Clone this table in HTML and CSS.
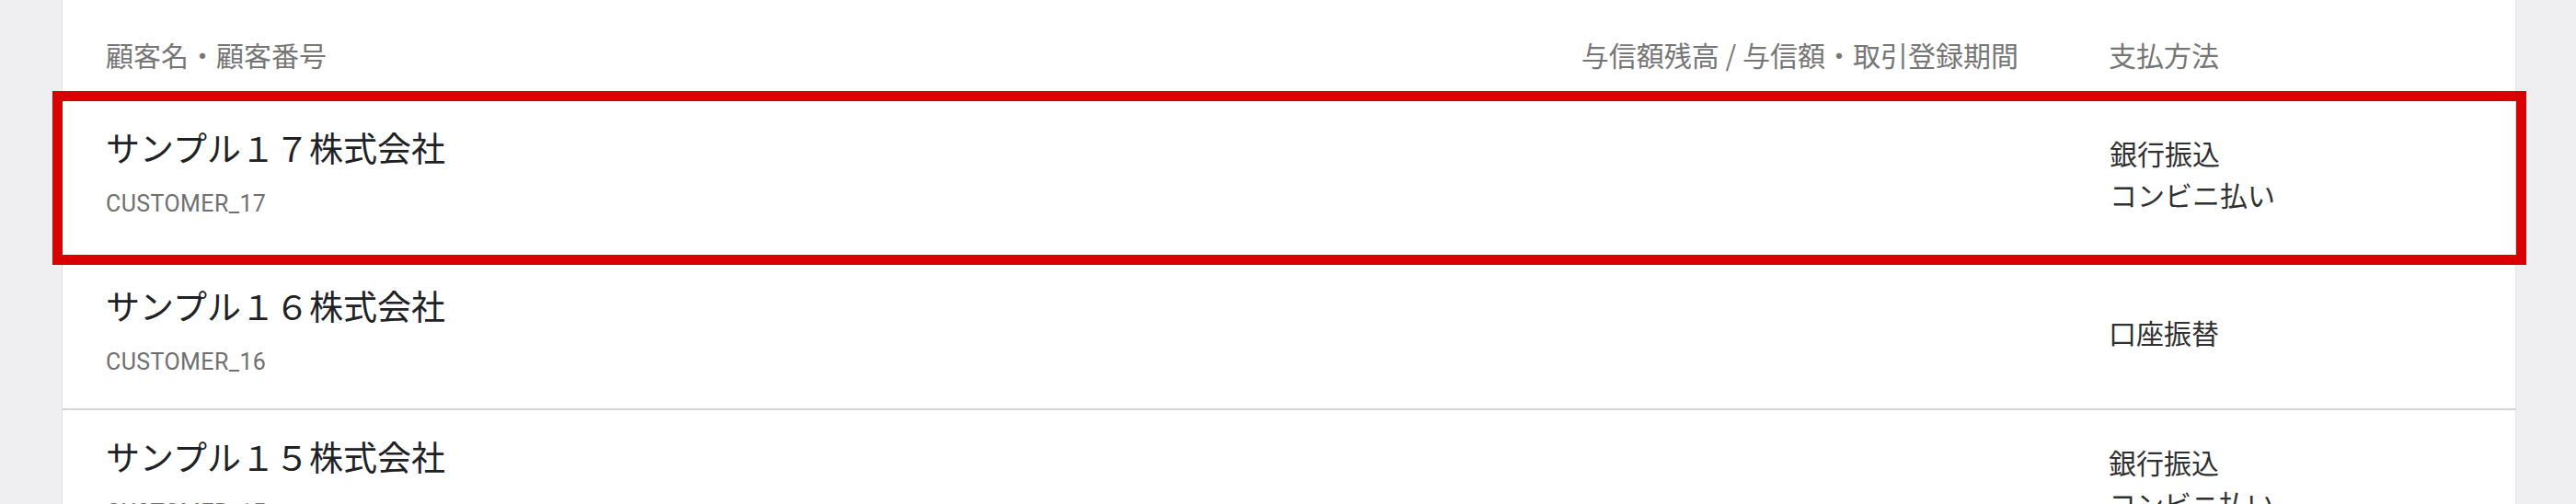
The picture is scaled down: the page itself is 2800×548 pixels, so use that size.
FILE: index.html
```html
<!DOCTYPE html>
<html lang="ja">
<head>
<meta charset="utf-8">
<title>顧客一覧</title>
<link rel="stylesheet" href="styles.css">
</head>
<body>
<div class="page">
  <div class="card">
    <div class="row head">
      <div class="c-name">顧客名・顧客番号</div>
      <div class="c-credit">与信額残高 / 与信額・取引登録期間</div>
      <div class="c-pay">支払方法</div>
    </div>
    <div class="row item selected">
      <div class="c-name">
        <div class="name">サンプル１７株式会社</div>
        <div class="code">CUSTOMER_17</div>
      </div>
      <div class="c-credit"></div>
      <div class="c-pay">
        <div>銀行振込</div>
        <div>コンビニ払い</div>
      </div>
    </div>
    <div class="row item">
      <div class="c-name">
        <div class="name">サンプル１６株式会社</div>
        <div class="code">CUSTOMER_16</div>
      </div>
      <div class="c-credit"></div>
      <div class="c-pay">
        <div>口座振替</div>
      </div>
    </div>
    <div class="row item">
      <div class="c-name">
        <div class="name">サンプル１５株式会社</div>
        <div class="code">CUSTOMER_15</div>
      </div>
      <div class="c-credit"></div>
      <div class="c-pay">
        <div>銀行振込</div>
        <div>コンビニ払い</div>
      </div>
    </div>
  </div>
</div>
</body>
</html>
```

FILE: styles.css
```css
html, body {
  margin: 0;
  height: 100%;
}

body {
  background: #efeff1;
  font-family: "Noto Sans CJK JP", "Noto Sans", sans-serif;
  overflow: hidden;
}

.page {
  padding: 0 65px 0 67px;
}

.card {
  background: #ffffff;
  border-left: 1px solid #e1e1e4;
  border-right: 1px solid #e1e1e4;
  min-height: 700px;
}

.row {
  display: grid;
  grid-template-columns: 1fr auto 395px;
  column-gap: 98px;
  align-items: center;
  padding: 0 47px;
}

.head {
  box-sizing: border-box;
  height: 99px;
  padding-top: 18px;
  font-size: 30px;
  line-height: 40px;
  color: #767676;
}

.head .c-credit {
  text-align: right;
}

.item {
  padding-top: 17px;
  padding-bottom: 17px;
  border-bottom: 2px solid #d5d5d8;
}

.item.selected {
  border: 11px solid #d90000;
  margin: 0 -12px 0 -11px;
}

.item .c-name {
  padding-bottom: 15px;
}

.name {
  font-size: 37px;
  line-height: 54px;
  color: #202124;
}

.code {
  margin-top: 17px;
  font-family: Roboto, "Liberation Sans", sans-serif;
  font-size: 25px;
  letter-spacing: 0.4px;
  line-height: 36px;
  color: #6f6f6f;
}

.item .c-pay {
  padding: 17px 0 26px;
  font-size: 30px;
  line-height: 45px;
  color: #303030;
}
```
